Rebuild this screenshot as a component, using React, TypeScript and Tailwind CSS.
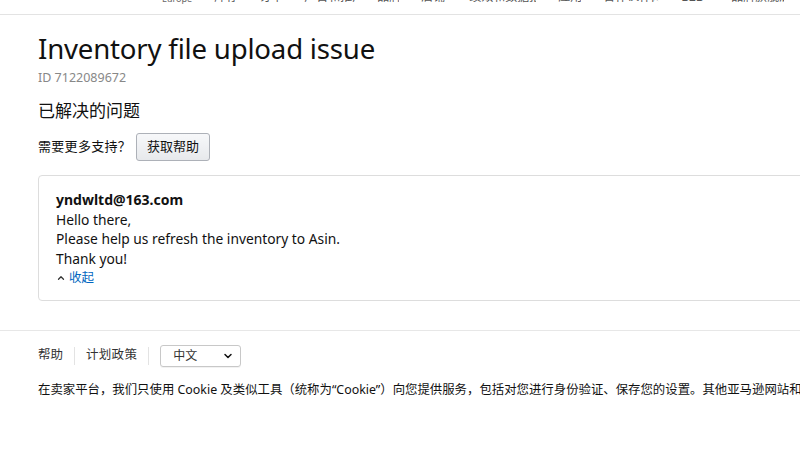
import { ChevronDown, ChevronUp } from "lucide-react";

const navItems = [
  { label: "库存管理", w: "w-[23px]" },
  { label: "订单管理", w: "w-[23px]" },
  { label: "广告和推广", w: "w-[51px]" },
  { label: "品牌", w: "w-[22px]" },
  { label: "店铺", w: "w-[26px]" },
  { label: "绩效和数据报告", w: "w-[67px]" },
  { label: "应用", w: "w-[23px]" },
  { label: "合作伙伴网络", w: "w-[56px]" },
  { label: "B2B", w: "w-[28px]" },
  { label: "品牌旗舰店", w: "w-[53px]" },
];

const App = () => {
  return (
    <div
      className="w-[800px] h-[464px] overflow-hidden bg-white text-[#111]"
      style={{ fontFamily: '"Noto Sans", "Noto Sans CJK SC", sans-serif' }}
    >
      <div className="w-[1100px]">
        {/* Top nav (scrolled off, only the bottom of the labels shows) */}
        <div className="h-[15px] overflow-hidden border-b border-[#e3e3e3]">
          <div className="flex items-end h-[3px] pl-[162px] gap-[22px]">
            <span className="text-[9px] leading-[9px] text-[#666]">Europe</span>
            {navItems.map((n) => (
              <span
                key={n.label}
                className={`${n.w} overflow-hidden whitespace-nowrap text-[12px] leading-[12px] text-[#555]`}
              >
                {n.label}
              </span>
            ))}
          </div>
        </div>

        {/* Main */}
        <div className="pl-[38px] pt-[13px]">
          <h1 className="text-[27.6px] leading-[40px] font-normal tracking-[-0.2px]">
            Inventory file upload issue
          </h1>
          <div className="text-[12.5px] leading-[16px] text-[#888] mt-[2px]">
            ID 7122089672
          </div>
          <div className="text-[17px] leading-[24px] mt-[13px]">已解决的问题</div>
          <div className="flex items-center mt-[10px] gap-[5px]">
            <span className="text-[13px] text-[#111] tracking-[0.3px]">需要更多支持？</span>
            <button className="h-[28px] px-[10px] text-[13px] border border-[#adb1b8] rounded-[3px] bg-gradient-to-b from-[#f7f8fa] to-[#e7e9ec] text-[#111]">
              获取帮助
            </button>
          </div>

          <div className="mt-[14px] border border-[#dddddd] rounded-[4px] pl-[17px] pt-[14px] pb-[12px] text-[13.8px] leading-[19.5px] w-[1000px]">
            <div className="font-bold text-[14px]">yndwltd@163.com</div>
            <div>Hello there,</div>
            <div>Please help us refresh the inventory to Asin.</div>
            <div>Thank you!</div>
            <div className="flex items-center gap-[3px] text-[12.5px] text-[#0066c0]">
              <ChevronUp className="w-[10px] h-[10px] text-[#333]" strokeWidth={3} />
              <span>收起</span>
            </div>
          </div>
        </div>

        {/* Footer */}
        <div className="mt-[29px] border-t border-[#e7e7e7] pl-[38px] pt-[14px]">
          <div className="flex items-center text-[12.5px] text-[#333]">
            <span>帮助</span>
            <span className="mx-[11px] h-[18px] border-l border-[#e3e3e3]" />
            <span className="tracking-[0.3px]">计划政策</span>
            <span className="mx-[11px] h-[18px] border-l border-[#e3e3e3]" />
            <div className="flex items-center justify-between w-[81px] h-[22px] border border-[#c8c8c8] rounded-[3px] pl-[12px] pr-[6px] shadow-[0_1px_0_rgba(0,0,0,0.05)]">
              <span className="text-[12px]">中文</span>
              <ChevronDown className="w-[12px] h-[12px] text-[#111]" strokeWidth={3} />
            </div>
          </div>
          <div className="mt-[14px] text-[12.4px] whitespace-nowrap text-[#111]">
            在卖家平台，我们只使用 Cookie 及类似工具（统称为“Cookie”）向您提供服务，包括对您进行身份验证、保存您的设置。其他亚马逊网站和服务也可能使用 Cookie。
          </div>
        </div>
      </div>
    </div>
  );
};

export default App;
